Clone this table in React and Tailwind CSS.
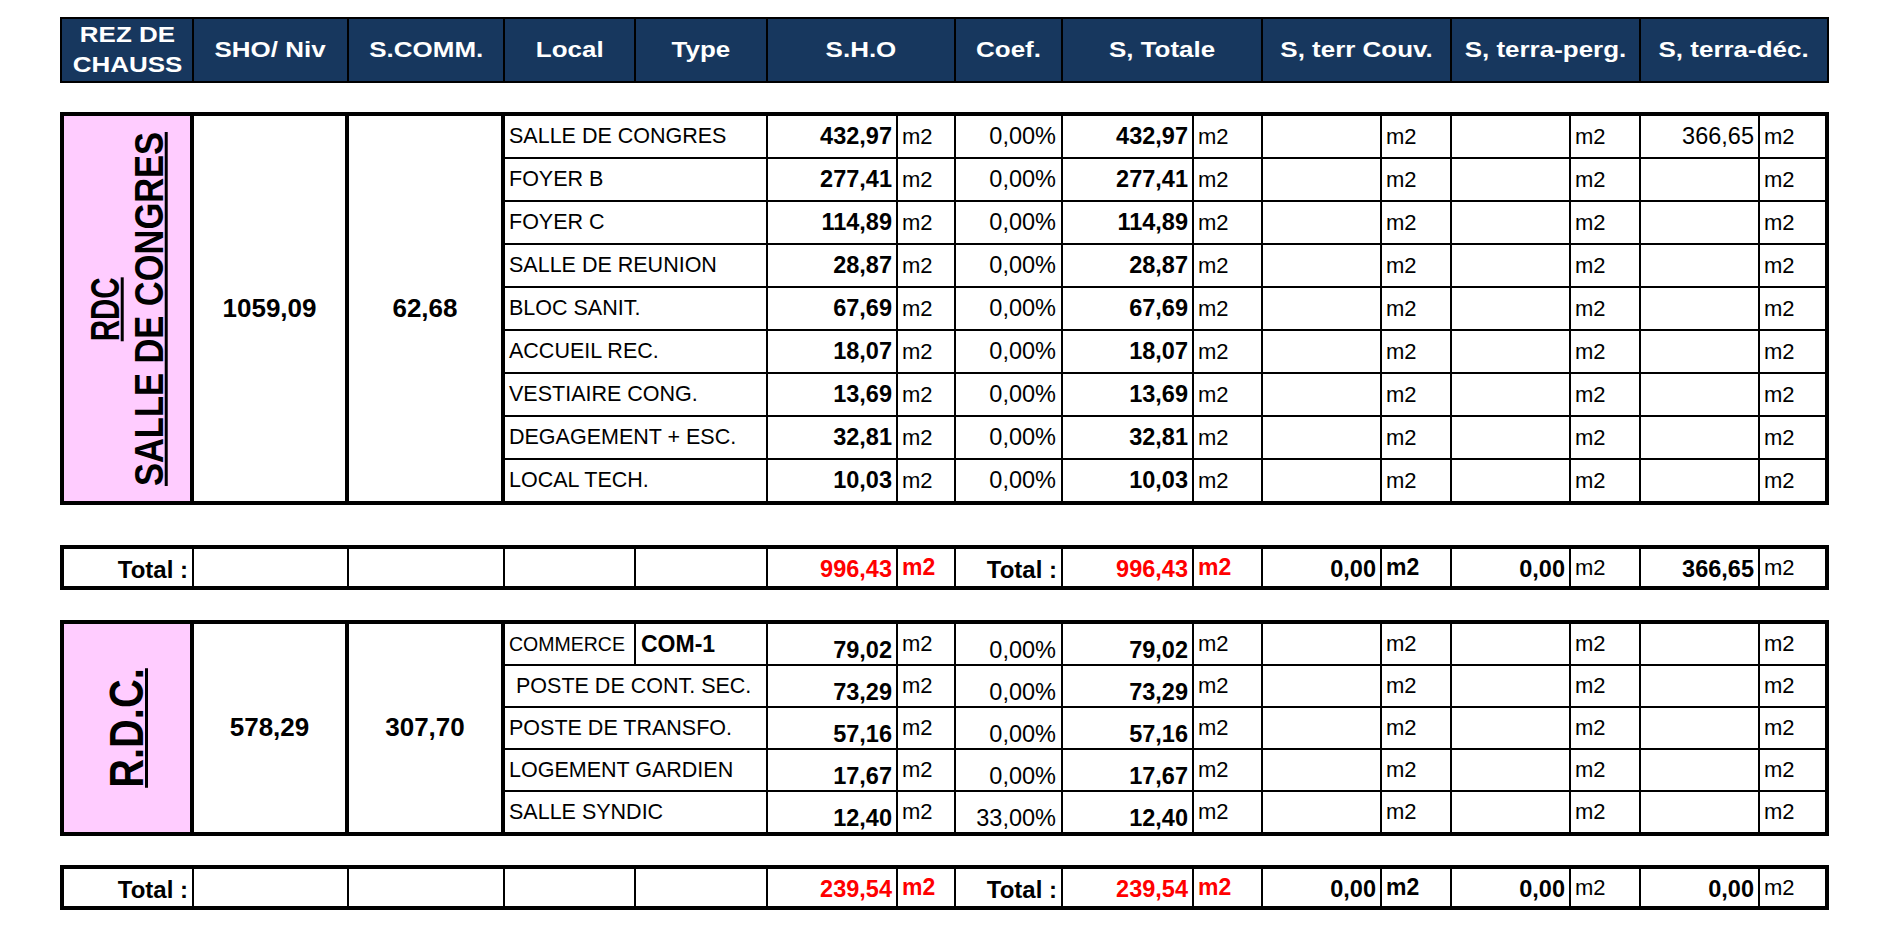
import React from 'react'
import clsx from 'clsx'

// same 16 tracks for both area tables and total rows, gap-[2px] on black = grid lines
const COLS = 'grid-cols-[128px_153px_154px_129px_130px_128px_56px_105px_129px_67px_117px_68px_117px_68px_117px_65px]'

const headers = [
  <>REZ DE<br />CHAUSS</>,
  'SHO/ Niv',
  'S.COMM.',
  'Local',
  'Type',
  'S.H.O',
  'Coef.',
  'S, Totale',
  'S, terr Couv.',
  'S, terra-perg.',
  'S, terra-déc.',
]

const congres = [
  { local: 'SALLE DE CONGRES', sho: '432,97', coef: '0,00%', dec: '366,65' },
  { local: 'FOYER B', sho: '277,41', coef: '0,00%' },
  { local: 'FOYER C', sho: '114,89', coef: '0,00%' },
  { local: 'SALLE DE REUNION', sho: '28,87', coef: '0,00%' },
  { local: 'BLOC SANIT.', sho: '67,69', coef: '0,00%' },
  { local: 'ACCUEIL REC.', sho: '18,07', coef: '0,00%' },
  { local: 'VESTIAIRE CONG.', sho: '13,69', coef: '0,00%' },
  { local: 'DEGAGEMENT + ESC.', sho: '32,81', coef: '0,00%' },
  { local: 'LOCAL TECH.', sho: '10,03', coef: '0,00%' },
]

const rdc = [
  { local: 'COMMERCE', type: 'COM-1', sho: '79,02', coef: '0,00%' },
  { local: 'POSTE DE CONT. SEC.', indent: true, sho: '73,29', coef: '0,00%' },
  { local: 'POSTE DE TRANSFO.', sho: '57,16', coef: '0,00%' },
  { local: 'LOGEMENT GARDIEN', sho: '17,67', coef: '0,00%' },
  { local: 'SALLE SYNDIC', sho: '12,40', coef: '33,00%' },
]

const Cell = ({ className, children }) => (
  <div className={clsx('bg-white flex items-center overflow-hidden whitespace-nowrap leading-[1.15]', className)}>
    {children}
  </div>
)

const M2 = ({ className }) => <Cell className={clsx('pl-[4px] text-[22px]', className)}>m2</Cell>

const AreaRow = ({ row, low }) => {
  const num = clsx('justify-end pr-[4px] text-[23.5px]', low && 'items-end')
  return (
    <>
      {row.type ? (
        <>
          <Cell className="pl-[4px] text-[19.5px]">{row.local}</Cell>
          <Cell className="pl-[5px] text-[23px] font-bold">{row.type}</Cell>
        </>
      ) : (
        <Cell className={clsx('col-span-2 text-[21.5px]', row.indent ? 'pl-[11px]' : 'pl-[4px]')}>{row.local}</Cell>
      )}
      <Cell className={clsx(num, 'font-bold')}>{row.sho}</Cell>
      <M2 />
      <Cell className={clsx(num, 'pr-[5px]')}>{row.coef}</Cell>
      <Cell className={clsx(num, 'font-bold')}>{row.sho}</Cell>
      <M2 />
      <Cell />
      <M2 />
      <Cell />
      <M2 />
      <Cell className={num}>{row.dec}</Cell>
      <M2 />
    </>
  )
}

const Block = ({ rows, rowClass, label, sho, comm, low }) => (
  <div className={clsx('grid gap-[2px] bg-black border-4 border-black w-[1769px]', COLS, rowClass)}>
    <div
      className={clsx(
        'bg-[#ffccff] border-r-2 border-black flex items-center justify-center overflow-hidden',
        rows.length === 9 ? 'row-span-9' : 'row-span-5'
      )}
    >
      {label}
    </div>
    <Cell className={clsx('justify-center border-r-2 border-black text-[26px] font-bold', rows.length === 9 ? 'row-span-9' : 'row-span-5')}>
      {sho}
    </Cell>
    <Cell className={clsx('justify-center border-r-2 border-black text-[26px] font-bold', rows.length === 9 ? 'row-span-9' : 'row-span-5')}>
      {comm}
    </Cell>
    {rows.map((row) => (
      <AreaRow key={row.local} row={row} low={low} />
    ))}
  </div>
)

const TotalRow = ({ total, dec }) => {
  const num = 'justify-end pr-[4px] text-[23.5px] font-bold'
  return (
    <div className={clsx('grid gap-[2px] bg-black border-4 border-black w-[1769px] auto-rows-[37px]', COLS)}>
      <Cell className="justify-end pr-[4px] pt-[4px] text-[24px] font-bold">Total :</Cell>
      <Cell />
      <Cell />
      <Cell />
      <Cell />
      <Cell className={clsx(num, 'pt-[4px] text-[#ff0000]')}>{total}</Cell>
      <M2 className="font-bold text-[23px] text-[#ff0000]" />
      <Cell className="justify-end pr-[4px] pt-[4px] text-[24px] font-bold">Total :</Cell>
      <Cell className={clsx(num, 'pt-[4px] text-[#ff0000]')}>{total}</Cell>
      <M2 className="font-bold text-[23px] text-[#ff0000]" />
      <Cell className={clsx(num, 'pt-[4px]')}>0,00</Cell>
      <M2 className="font-bold text-[23px]" />
      <Cell className={clsx(num, 'pt-[4px]')}>0,00</Cell>
      <M2 />
      <Cell className={clsx(num, 'pt-[4px]')}>{dec}</Cell>
      <M2 />
    </div>
  )
}

const App = () => {
  return (
    <div className="min-h-screen bg-white text-black font-['Liberation_Sans',Arial,sans-serif] pl-[60px] pt-[17px] flex flex-col">
      {/* column headers */}
      <div className="grid grid-cols-[130px_153px_154px_129px_130px_186px_105px_198px_187px_187px_186px] gap-[2px] bg-black border-2 border-black h-[66px] w-[1769px]">
        {headers.map((h, i) => (
          <div key={i} className="bg-[#17375e] text-white font-bold text-[22px] leading-[30px] flex items-center justify-center text-center">
            <span className="inline-block scale-x-[1.18] whitespace-nowrap">{h}</span>
          </div>
        ))}
      </div>

      <div className="mt-[29px]">
        <Block
          rows={congres}
          rowClass="auto-rows-[41px]"
          sho="1059,09"
          comm="62,68"
          label={
            <div className="-rotate-90 flex flex-col items-center whitespace-nowrap font-bold text-[41px] leading-[44px]">
              <span className="inline-block scale-x-[0.72] underline decoration-[3px] underline-offset-2">RDC</span>
              <span className="inline-block scale-x-[0.84] underline decoration-[3px] underline-offset-2">SALLE DE CONGRES</span>
            </div>
          }
        />
      </div>

      <div className="mt-[40px]">
        <TotalRow total="996,43" dec="366,65" />
      </div>

      <div className="mt-[30px]">
        <Block
          rows={rdc}
          rowClass="auto-rows-[40px]"
          sho="578,29"
          comm="307,70"
          low
          label={
            <div className="-rotate-90 whitespace-nowrap font-bold text-[48px] leading-[50px]">
              <span className="inline-block scale-x-[0.83] underline decoration-[3px] underline-offset-2">R.D.C.</span>
            </div>
          }
        />
      </div>

      <div className="mt-[29px]">
        <TotalRow total="239,54" dec="0,00" />
      </div>
    </div>
  )
}

export default App
